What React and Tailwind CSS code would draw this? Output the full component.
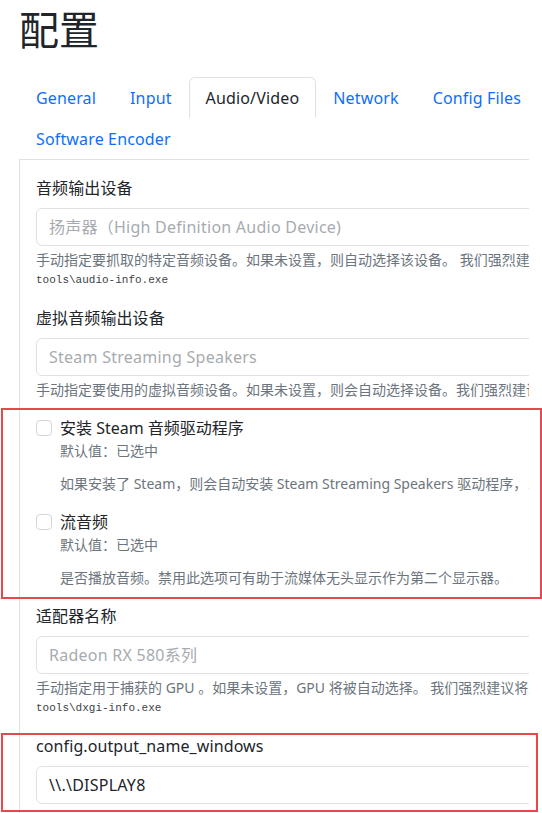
import React from 'react';

const tabs = [
  { label: 'General' },
  { label: 'Input' },
  { label: 'Audio/Video', active: true },
  { label: 'Network' },
  { label: 'Config Files' },
  { label: 'Software Encoder' },
];

function TextField({ label, placeholder, value, help, pre }) {
  return (
    <div className="mb-4">
      <div className="h-6 text-[16px] leading-6 text-[#212529] mb-2 tracking-[0.1px]">{label}</div>
      <div className="w-[640px] h-[38px] border border-[#dee2e6] rounded-[6px] px-3 flex items-center text-[16px] leading-6 tracking-[0.25px]">
        {value ? (
          <span className="text-[#212529]">{value}</span>
        ) : (
          <span className="text-[#a7abaf]">{placeholder}</span>
        )}
      </div>
      {help && (
        <div className="h-[21px] mt-[3px] text-[14px] leading-[21px] text-[#6c757d] whitespace-nowrap">{help}</div>
      )}
      {pre && (
        <pre className="h-5 pt-px text-[11px] leading-[19px] text-[#3d4246] font-['Liberation_Mono',monospace]">{pre}</pre>
      )}
    </div>
  );
}

function CheckField({ label, defaultText, help }) {
  return (
    <div className="mb-4 flex">
      <div className="w-4 h-4 mt-1 mr-2 rounded-[4px] border border-[#d3d7db] bg-white shrink-0" />
      <div>
        <div className="h-6 text-[16px] leading-6 text-[#212529]">{label}</div>
        <div className="h-[21px] text-[14px] leading-[21px] text-[#6c757d]">{defaultText}</div>
        <div className="h-[21px] mt-3 text-[14px] leading-[21px] text-[#6c757d] whitespace-nowrap">{help}</div>
      </div>
    </div>
  );
}

export default function App() {
  return (
    <div className="relative w-[542px] h-[813px] bg-white overflow-hidden font-['Noto_Sans','Noto_Sans_CJK_SC',sans-serif]">
      <div className="w-[529px] overflow-hidden">
        <div className="pl-[19px] pt-1">
          <h1 className="h-12 text-[40px] leading-[48px] text-[#212529] mb-[25px] font-['Noto_Sans_CJK_SC',sans-serif]">配置</h1>

          {/* tab strip */}
          <nav className="w-[600px] flex flex-wrap border-b border-[#dee2e6]">
            {tabs.map((t) => (
              <div
                key={t.label}
                className={
                  t.active
                    ? 'h-[41px] px-4 flex items-center text-[16px] tracking-[0.15px] text-[#212529] border border-[#dee2e6] border-b-white rounded-t-[6px] bg-white -mb-px'
                    : 'h-[41px] px-4 flex items-center text-[16px] tracking-[0.15px] text-[#0d6efd] border border-transparent'
                }
              >
                {t.label}
              </div>
            ))}
          </nav>

          {/* settings panel */}
          <div className="w-[700px] border-l border-[#dee2e6] px-4 pt-4 pb-4">
            <TextField
              label="音频输出设备"
              placeholder="扬声器（High Definition Audio Device)"
              help="手动指定要抓取的特定音频设备。如果未设置，则自动选择该设备。 我们强烈建议将此字段留空以使用自动设备选择！"
              pre="tools\audio-info.exe"
            />
            <TextField
              label="虚拟音频输出设备"
              placeholder="Steam Streaming Speakers"
              help="手动指定要使用的虚拟音频设备。如果未设置，则会自动选择设备。我们强烈建议将此字段留空以使用自动设备选择！"
            />
            <CheckField
              label="安装 Steam 音频驱动程序"
              defaultText="默认值：已选中"
              help="如果安装了 Steam，则会自动安装 Steam Streaming Speakers 驱动程序，以支持 5.1/7.1 环绕声和主机音频静音。"
            />
            <CheckField
              label="流音频"
              defaultText="默认值：已选中"
              help="是否播放音频。禁用此选项可有助于流媒体无头显示作为第二个显示器。"
            />
            <TextField
              label="适配器名称"
              placeholder="Radeon RX 580系列"
              help="手动指定用于捕获的 GPU 。如果未设置，GPU 将被自动选择。 我们强烈建议将此字段留空以使用自动 GPU 选择！"
              pre="tools\dxgi-info.exe"
            />
            <TextField label="config.output_name_windows" value="\\.\DISPLAY8" />
          </div>
        </div>
      </div>

      {/* highlight frames */}
      <div className="absolute left-[1px] top-[408px] w-[541px] h-[191px] border-2 border-[#e5484d]" />
      <div className="absolute left-[1px] top-[733px] w-[537px] h-[79px] border-2 border-[#e5484d]" />
    </div>
  );
}
